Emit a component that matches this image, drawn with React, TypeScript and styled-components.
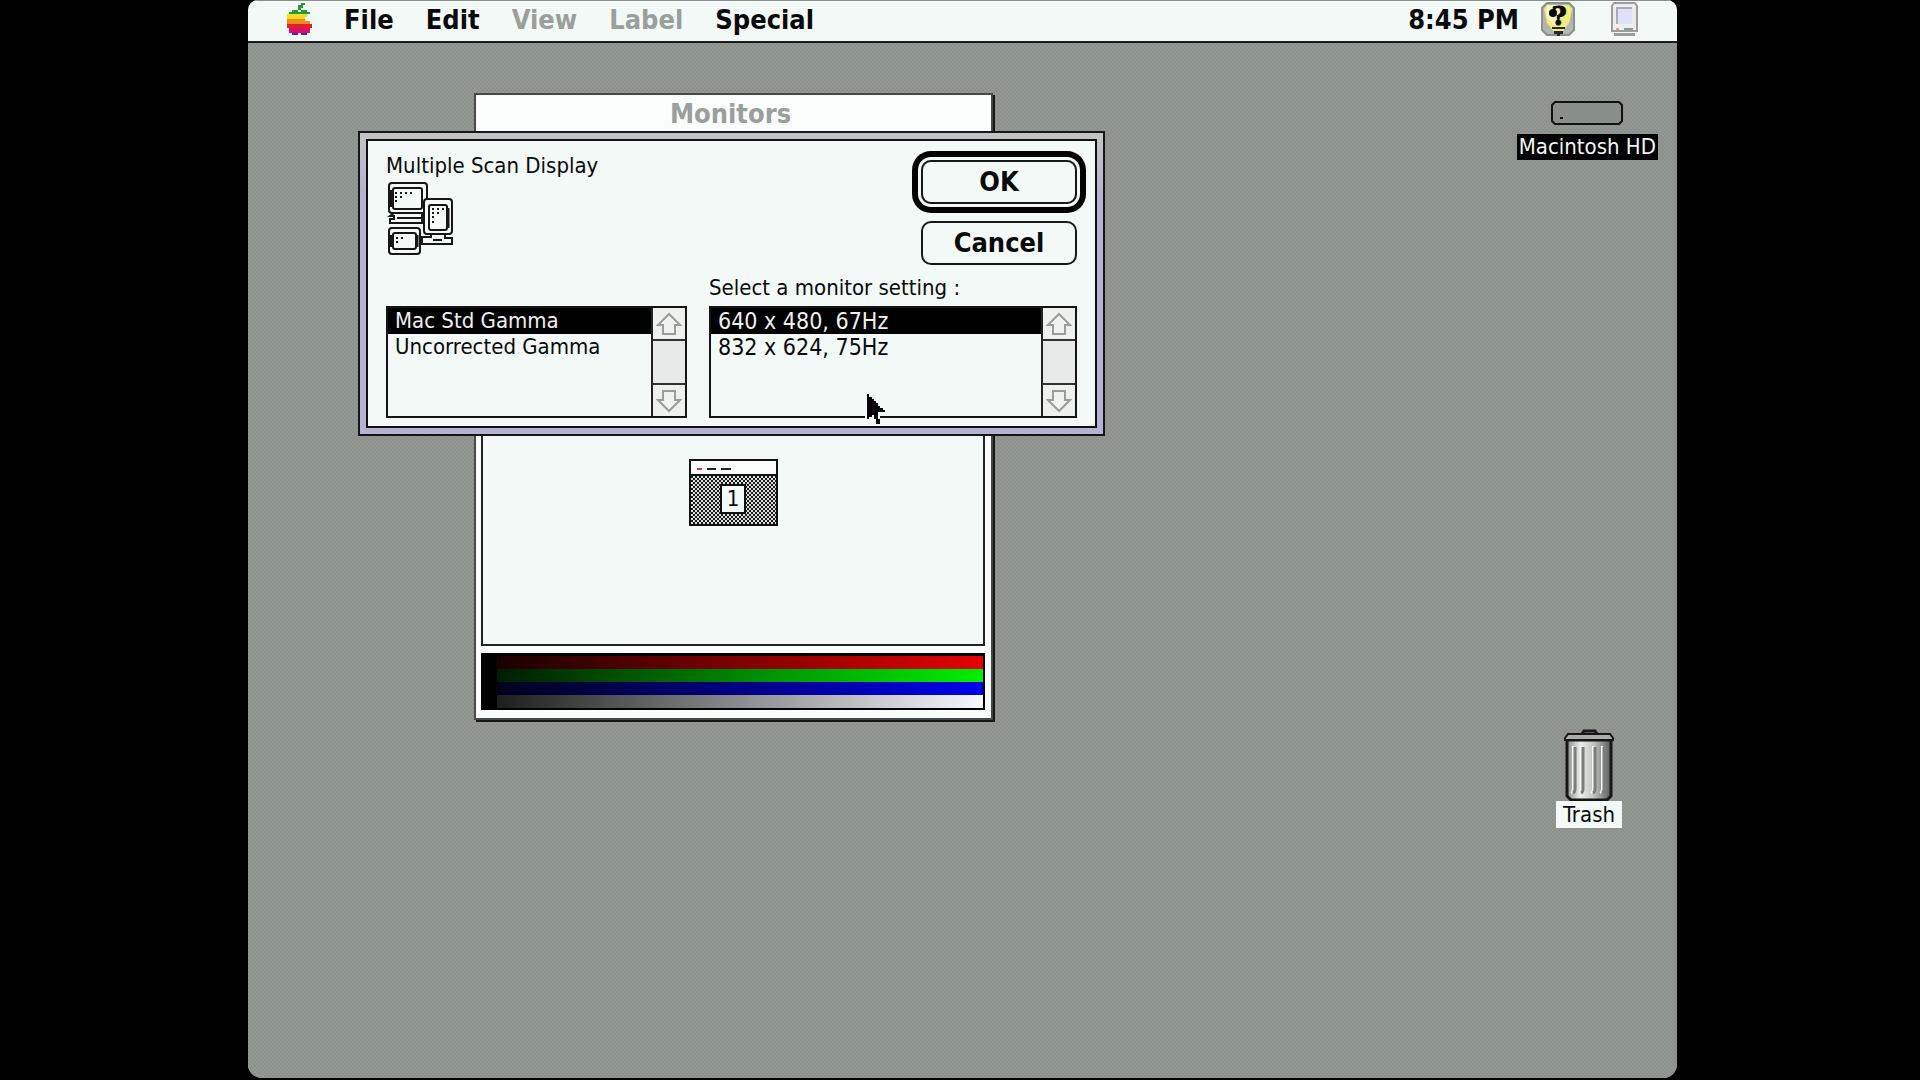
import React, { useState } from "react";
import styled, { createGlobalStyle, css } from "styled-components";

const ink = "#0a0a0c";
const paper = "#f2f9f6";
const dim = "#9a9f9c";

const Global = createGlobalStyle`
  *, *::before, *::after { box-sizing: border-box; }
  body { margin: 0; background: #000; color: ${ink}; }
  button { font: inherit; color: inherit; background: none; border: 0; padding: 0; }
`;

const systemFont = css`
  font-family: "DejaVu Sans Condensed", "DejaVu Sans", sans-serif;
  font-weight: 700;
  font-size: 27px;
  line-height: 32px;
`;

const smallFont = css`
  font-family: "DejaVu Sans Condensed", "DejaVu Sans", sans-serif;
  font-weight: 400;
  font-size: 22px;
  line-height: 26px;
`;

const Page = styled.div`
  display: flex;
  min-height: 100vh;
  padding: 0 243px 2px 248px;
  background: #000;
`;

const Screen = styled.div`
  flex: 1;
  display: flex;
  flex-direction: column;
  overflow: hidden;
  border-radius: 10px 10px 14px 14px;
  background: #8e9590;
`;

const MenuBar = styled.header`
  ${systemFont}
  display: flex;
  align-items: center;
  justify-content: space-between;
  height: 43px;
  padding: 0 39px 2px;
  background: ${paper};
  border-top: 1px solid #8b8f8d;
  border-bottom: 2px solid #1c1c1e;
`;

const Menus = styled.nav`
  display: flex;
  align-items: center;
  gap: 32px;
`;

const MenuButton = styled.button`
  &:disabled { color: ${dim}; }
`;

const Status = styled.div`
  display: flex;
  align-items: center;
  gap: 22px;
`;

const StatusButton = styled.button<{ $wide?: boolean }>`
  display: flex;
  margin-left: ${(p) => (p.$wide ? "14px" : "0")};
  margin-bottom: 2px;
`;

const Desktop = styled.main`
  position: relative;
  flex: 1;
  background-color: #8e9590;
  background-image: conic-gradient(#939893 25%, #8b918d 0 50%, #939893 0 75%, #8b918d 0);
  background-size: 4px 4px;
`;

const DesktopItem = styled.button<{ $top: number; $right: number }>`
  ${smallFont}
  position: absolute;
  top: ${(p) => p.$top}px;
  right: ${(p) => p.$right}px;
  display: flex;
  flex-direction: column;
  align-items: center;
`;

const ItemLabel = styled.span<{ $selected?: boolean }>`
  padding: ${(p) => (p.$selected ? "0 2px" : "1px 7px 0")};
  white-space: nowrap;
  color: ${(p) => (p.$selected ? "#f4f6f5" : ink)};
  background: ${(p) => (p.$selected ? "#000" : paper)};
  margin-top: ${(p) => (p.$selected ? "9px" : "0")};
`;

const Window = styled.section`
  position: absolute;
  top: 50px;
  left: 226px;
  width: 519px;
  padding: 0 6px 8px 5px;
  background: #fafdfb;
  border: 2px solid #454947;
  box-shadow: 2px 2px 0 #161817;
`;

const WindowTitle = styled.h1`
  ${systemFont}
  margin: 0;
  padding: 3px 5px 5px 0;
  text-align: center;
  color: ${dim};
`;

const Panel = styled.div`
  display: flex;
  justify-content: center;
  align-items: flex-start;
  height: 511px;
  padding-top: 322px;
  background: ${paper};
  border: 2px solid #222423;
`;

const MonitorTile = styled.button`
  display: flex;
  flex-direction: column;
  width: 89px;
  border: 2px solid #111;
  background: #fbfdfc;
`;

const TileMenu = styled.span`
  display: flex;
  align-items: center;
  gap: 5px;
  width: 100%;
  height: 15px;
  padding: 2px 0 0 6px;
  border-bottom: 2px solid #111;
`;

const Dash = styled.i<{ $w: number; $c: string }>`
  width: ${(p) => p.$w}px;
  height: 2px;
  background: ${(p) => p.$c};
`;

const TileScreen = styled.span`
  display: flex;
  justify-content: center;
  width: 100%;
  padding: 8px 0 10px;
  background-image: conic-gradient(#d9dcda 25%, #1c1e1d 0 50%, #d9dcda 0 75%, #1c1e1d 0);
  background-size: 4px 4px;
`;

const TileNumber = styled.span`
  ${smallFont}
  width: 26px;
  border: 2px solid #111;
  background: ${paper};
`;

const Ramps = styled.div`
  margin-top: 7px;
  padding: 3px 2px 2px 16px;
  background: #000;
`;

const Ramp = styled.div<{ $from: string; $to: string }>`
  height: 13px;
  background: linear-gradient(90deg, ${(p) => p.$from}, ${(p) => p.$to});
`;

const Dialog = styled.form`
  position: absolute;
  top: 88px;
  left: 110px;
  padding: 6px;
  border: 2px solid #15151c;
  background: linear-gradient(180deg, #c2c3c3 0 8px, #b4b4d0 60px 100%);
`;

const DialogBody = styled.div`
  display: grid;
  grid-template-columns: 301px 368px;
  column-gap: 22px;
  padding: 19px 18px 8px;
  background: ${paper};
  border: 2px solid #101014;
`;

const DeviceColumn = styled.div`
  display: flex;
  flex-direction: column;
  justify-content: space-between;
`;

const SettingColumn = styled.div`
  display: flex;
  flex-direction: column;
`;

const Device = styled.div`
  display: flex;
  flex-direction: column;
  align-items: flex-start;
  gap: 3px;
  margin-top: -7px;
`;

const Caption = styled.h2`
  ${smallFont}
  margin: 0;
`;

const SettingCaption = styled(Caption)`
  margin-bottom: 5px;
`;

const Actions = styled.div`
  display: flex;
  flex-direction: column;
  align-items: flex-end;
  gap: 17px;
  margin-bottom: 10px;
`;

const PushButton = styled.button<{ $primary?: boolean }>`
  ${systemFont}
  width: 156px;
  height: 44px;
  border: 2px solid #18181a;
  border-radius: 10px;
  ${(p) => p.$primary && css`box-shadow: 0 0 0 3px ${paper}, 0 0 0 9px #000;`}
`;

const ListBox = styled.div`
  display: flex;
  height: 112px;
  border: 2px solid #151516;
`;

const Options = styled.div`
  flex: 1;
`;

const Option = styled.label<{ $size: number }>`
  ${smallFont}
  font-size: ${(p) => p.$size}px;
  display: block;
  padding-left: 7px;
  white-space: nowrap;
  &:has(input:checked) { background: #000; color: #eef0ef; }
`;

const HiddenRadio = styled.input`
  appearance: none;
  position: absolute;
  width: 0;
  height: 0;
  margin: 0;
`;

const ScrollBar = styled.div`
  display: flex;
  flex-direction: column;
  justify-content: space-between;
  width: 34px;
  border-left: 2px solid #222;
  background: #e6eae8;
`;

const ScrollButton = styled.button<{ $down?: boolean }>`
  display: flex;
  align-items: center;
  justify-content: center;
  height: 33px;
  background: #ecf1ee;
  ${(p) => (p.$down ? "border-top" : "border-bottom")}: 2px solid #333;
  svg { transform: ${(p) => (p.$down ? "rotate(180deg)" : "none")}; }
`;

const Pointer = styled.div`
  position: absolute;
  top: 349px;
  left: 617px;
  pointer-events: none;
`;

/* Paints a small bitmap: each character in a row picks a colour from the palette. */
function Bitmap({ rows, palette, width, height }: {
  rows: string[]; palette: Record<string, string>; width: number; height: number;
}) {
  return (
    <svg width={width} height={height} viewBox={`0 0 ${rows[0].length} ${rows.length}`}
      preserveAspectRatio="none" shapeRendering="crispEdges" aria-hidden="true">
      {rows.flatMap((row, y) =>
        [...row].map((c, x) => palette[c] && <rect key={`${x}-${y}`} x={x} y={y} width="1" height="1" fill={palette[c]} />)
      )}
    </svg>
  );
}

const apple = [
  "......gg...",
  ".....gg....",
  ".....g.....",
  "..ggg.ggg..",
  ".ggggggggg.",
  "yyyyyyyyy..",
  "yyyyyyyy...",
  "oooooooo...",
  "oooooooooo.",
  "rrrrrrrrrrr",
  "rrrrrrrrrrr",
  ".mmmmmmmmm.",
  ".mmmmmmmmm.",
  "..bbb.bbb..",
];

const arrow = [
  "ww........",
  "wkw.......",
  "wkkw......",
  "wkkkw.....",
  "wkkkkw....",
  "wkkkkkw...",
  "wkkkkkkw..",
  "wkkkkkkkw.",
  "wkkkkkkkkw",
  "wkkkkkwwww",
  "wkkwkkw...",
  "wkwwkkw...",
  "ww..wkkw..",
  "....wkkw..",
  ".....ww...",
];

const HelpIcon = () => (
  <svg width="34" height="34" viewBox="0 0 34 34" aria-hidden="true">
    <path d="M6 1h22l5 5v22l-5 5H6l-5-5V6z" fill="#b4b5b0" stroke="#8d908d" strokeWidth="2" />
    <path d="M6 3h22l3 4-3 14-6 8H12L6 21 3 7z" fill="#f1ec7c" />
    <path d="M6 3h17l-7 13 2 7h-5L5 14z" fill="#f6f4c9" />
    <circle cx="12" cy="11" r="4" fill="#0b0b0b" />
    <text x="18" y="23" textAnchor="middle" fontFamily="DejaVu Serif" fontWeight="700" fontSize="26" fill="#0b0b0b" stroke="#0b0b0b">?</text>
    <path d="M11 25h13v2H11z M13 29h9v3h-3v2h-3v-2h-3z" fill="#292929" />
  </svg>
);

const MacIcon = () => (
  <svg width="27" height="34" viewBox="0 0 27 34" aria-hidden="true">
    <path d="M3 1h21l2 3v25H1V4z" fill="#eceeed" stroke="#9a9c9d" strokeWidth="2" />
    <path d="M6 5h15v17H6z" fill="#e0e0fa" />
    <path d="M6 22V6h15" fill="none" stroke="#aaaabb" strokeWidth="2" />
    <path d="M5 26h3v2H5z" fill="#dc9d9a" />
    <path d="M13 26h9v2h-9z" fill="#909594" />
    <path d="M3 31h21v3H3z" fill="#9c9e9e" />
  </svg>
);

const DriveIcon = () => (
  <svg width="72" height="24" viewBox="0 0 72 24" aria-hidden="true">
    <path d="M4 1h64l3 3v16l-3 3H4l-3-3V4z" fill="#898f8b" stroke="#111" strokeWidth="2" />
    <path d="M9 16h3v2H9z" fill="#111" />
  </svg>
);

const TrashIcon = () => (
  <svg width="50" height="72" viewBox="0 0 50 72" aria-hidden="true">
    <defs>
      <linearGradient id="metal">
        <stop offset="0" stopColor="#8a8d8b" />
        <stop offset=".3" stopColor="#ececea" />
        <stop offset=".6" stopColor="#c4c6c4" />
        <stop offset="1" stopColor="#5a5d5b" />
      </linearGradient>
    </defs>
    <path d="M18 5l2-3h11l2 3" fill="#999" stroke="#1a1a1a" strokeWidth="3" />
    <path d="M3 11h44v56l-4 4H7l-4-4z" fill="url(#metal)" stroke="#161616" strokeWidth="3" />
    <path d="M4 5h42l3 4v2H1V9z" fill="#aaadab" stroke="#161616" strokeWidth="2" />
    {[9, 17, 29, 38].map((x) => (
      <g key={x}>
        <path d={`M${x} 17v42q0 4 -2 5`} fill="none" stroke="#f4f5f4" strokeWidth="2" />
        <path d={`M${x + 2} 18v42q0 3 -2 4`} fill="none" stroke="#7b7f7c" strokeWidth="3" />
      </g>
    ))}
  </svg>
);

const DisplaysIcon = () => (
  <svg width="68" height="73" viewBox="0 0 68 73" fill={paper} stroke="#161616" strokeWidth="2" aria-hidden="true">
    <path d="M8 31l-4 3h4v3H4v4h32V31z" />
    <path d="M11 36h25" />
    <rect x="3" y="1" width="38" height="30" rx="3" />
    <rect x="7" y="6" width="29" height="21" rx="2" />
    <path d="M5 8v17" strokeWidth="3" />
    <path d="M45 51v4h-9v7h30v-6h-7v-5z" />
    <path d="M47 58h9" />
    <rect x="38" y="17" width="28" height="35" rx="3" />
    <rect x="43" y="23" width="18" height="25" rx="2" />
    <path d="M62 26v20" strokeWidth="3" />
    <rect x="3" y="46" width="31" height="26" rx="3" />
    <rect x="7" y="51" width="23" height="16" rx="2" />
    <path d="M31 53v12M5 53v12" strokeWidth="3" />
    <path d="M9 11h2M14 11h2M19 11h2M24 11h2M9 15h2M14 15h2M9 19h2M46 27h2M51 27h2M56 27h2M46 31h2M51 31h2M46 35h2M46 40h2M10 56h2M15 56h2M10 60h2" />
  </svg>
);

const ArrowIcon = () => (
  <svg width="26" height="24" viewBox="0 0 26 24" aria-hidden="true">
    <path d="M13 2L24 13h-5v9H7v-9H2z" fill="#eef2f0" stroke="#999d9b" strokeWidth="2" />
  </svg>
);

function List({ name, items, size }: { name: string; items: string[]; size: number }) {
  const [picked, setPicked] = useState(items[0]);
  return (
    <ListBox role="radiogroup" aria-label={name}>
      <Options>
        {items.map((item) => (
          <Option key={item} $size={size}>
            <HiddenRadio type="radio" name={name} checked={picked === item} onChange={() => setPicked(item)} />
            {item}
          </Option>
        ))}
      </Options>
      <ScrollBar>
        <ScrollButton type="button" aria-label="Scroll up"><ArrowIcon /></ScrollButton>
        <ScrollButton type="button" aria-label="Scroll down" $down><ArrowIcon /></ScrollButton>
      </ScrollBar>
    </ListBox>
  );
}

export default function App() {
  return (
    <Page>
      <Global />
      <Screen>
        <MenuBar>
          <Menus>
            <StatusButton aria-label="Apple menu">
              <Bitmap rows={apple} width={25} height={32}
                palette={{ g: "#1f9e35", y: "#f6dc22", o: "#f08a1c", r: "#e01f26", m: "#d8106c", b: "#4a22c4" }} />
            </StatusButton>
            <MenuButton>File</MenuButton>
            <MenuButton>Edit</MenuButton>
            <MenuButton disabled>View</MenuButton>
            <MenuButton disabled>Label</MenuButton>
            <MenuButton>Special</MenuButton>
          </Menus>
          <Status>
            <time>8:45 PM</time>
            <StatusButton aria-label="Help"><HelpIcon /></StatusButton>
            <StatusButton aria-label="Applications" $wide><MacIcon /></StatusButton>
          </Status>
        </MenuBar>
        <Desktop>
          <DesktopItem $top={58} $right={19}>
            <DriveIcon />
            <ItemLabel $selected>Macintosh HD</ItemLabel>
          </DesktopItem>
          <DesktopItem $top={686} $right={55}>
            <TrashIcon />
            <ItemLabel>Trash</ItemLabel>
          </DesktopItem>

          <Window>
            <WindowTitle>Monitors</WindowTitle>
            <Panel>
              <MonitorTile>
                <TileMenu>
                  <Dash $w={5} $c="#d8352c" />
                  <Dash $w={9} $c="#222" />
                  <Dash $w={10} $c="#222" />
                </TileMenu>
                <TileScreen><TileNumber>1</TileNumber></TileScreen>
              </MonitorTile>
            </Panel>
            <Ramps>
              <Ramp $from="#180000" $to="#e60000" />
              <Ramp $from="#001c00" $to="#00f000" />
              <Ramp $from="#00001c" $to="#0000ec" />
              <Ramp $from="#1c1e1d" $to="#f8f8ff" />
            </Ramps>
          </Window>

          <Dialog onSubmit={(e) => e.preventDefault()}>
            <DialogBody>
              <DeviceColumn>
                <Device>
                  <Caption>Multiple Scan Display</Caption>
                  <DisplaysIcon />
                </Device>
                <List name="Gamma" items={["Mac Std Gamma", "Uncorrected Gamma"]} size={22} />
              </DeviceColumn>
              <SettingColumn>
                <Actions>
                  <PushButton type="submit" $primary>OK</PushButton>
                  <PushButton type="button">Cancel</PushButton>
                </Actions>
                <SettingCaption>Select a monitor setting :</SettingCaption>
                <List name="Monitor setting" items={["640 x 480, 67Hz", "832 x 624, 75Hz"]} size={23} />
              </SettingColumn>
            </DialogBody>
          </Dialog>

          <Pointer>
            <Bitmap rows={arrow} width={22} height={34} palette={{ k: "#050507", w: paper }} />
          </Pointer>
        </Desktop>
      </Screen>
    </Page>
  );
}
